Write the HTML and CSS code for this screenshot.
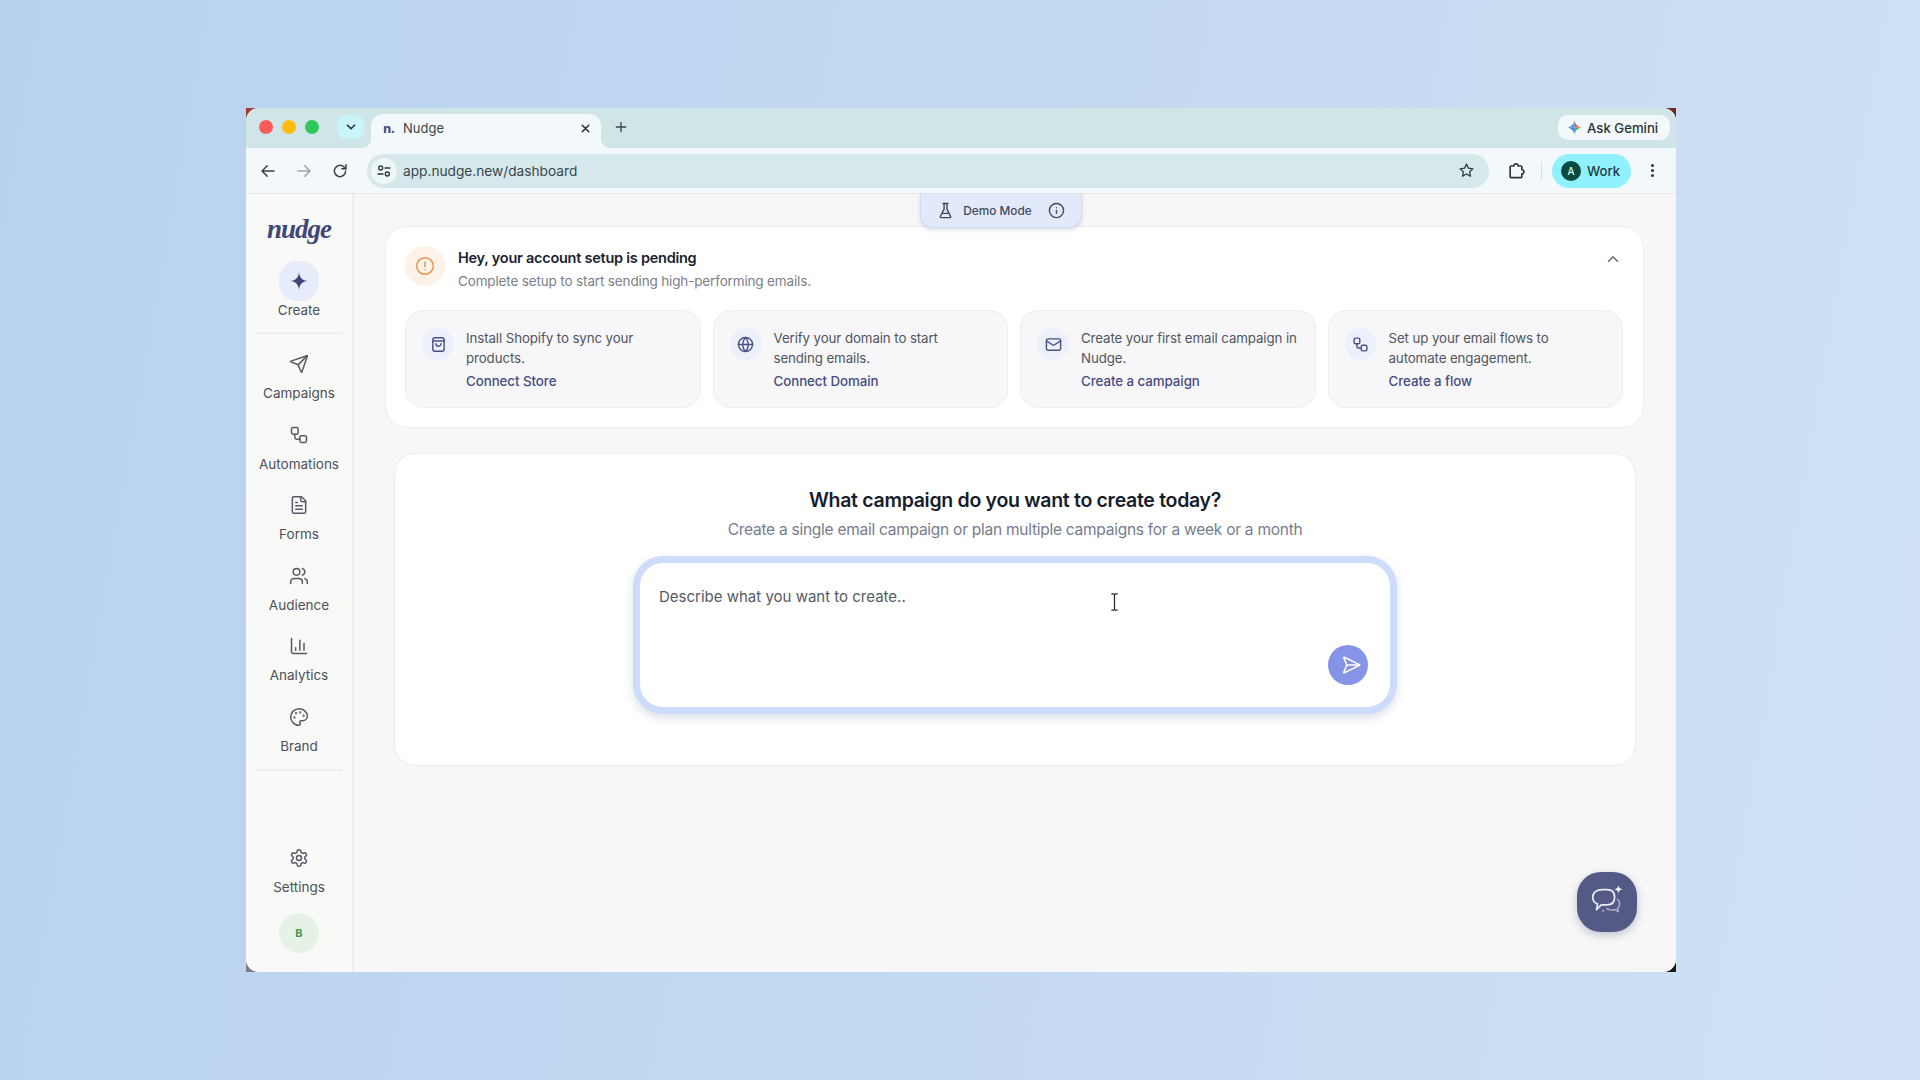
FILE: index.html
```html
<!DOCTYPE html>
<html lang="en">
<head>
<meta charset="utf-8">
<title>Nudge</title>
<link rel="stylesheet" href="styles.css">
</head>
<body>
<svg class="defs" width="0" height="0" aria-hidden="true">
  <symbol id="i-send" viewBox="0 0 24 24"><path d="M14.536 21.686a.5.5 0 0 0 .937-.024l6.5-19a.496.496 0 0 0-.635-.635l-19 6.5a.5.5 0 0 0-.024.937l7.93 3.18a2 2 0 0 1 1.112 1.11z"/><path d="m21.854 2.147-10.94 10.939"/></symbol>
  <symbol id="i-flow" viewBox="0 0 24 24"><rect width="8" height="8" x="3" y="3" rx="2"/><path d="M7 11v4a2 2 0 0 0 2 2h4"/><rect width="8" height="8" x="13" y="13" rx="2"/></symbol>
  <symbol id="i-file" viewBox="0 0 24 24"><path d="M15 2H6a2 2 0 0 0-2 2v16a2 2 0 0 0 2 2h12a2 2 0 0 0 2-2V7Z"/><path d="M14 2v4a2 2 0 0 0 2 2h4"/><path d="M10 9H8"/><path d="M16 13H8"/><path d="M16 17H8"/></symbol>
  <symbol id="i-users" viewBox="0 0 24 24"><path d="M16 21v-2a4 4 0 0 0-4-4H6a4 4 0 0 0-4 4v2"/><circle cx="9" cy="7" r="4"/><path d="M22 21v-2a4 4 0 0 0-3-3.87"/><path d="M16 3.13a4 4 0 0 1 0 7.75"/></symbol>
  <symbol id="i-chart" viewBox="0 0 24 24"><path d="M3 3v16a2 2 0 0 0 2 2h16"/><path d="M18 17V9"/><path d="M13 17V5"/><path d="M8 17v-3"/></symbol>
  <symbol id="i-palette" viewBox="0 0 24 24"><circle cx="13.5" cy="6.5" r=".5"/><circle cx="17.5" cy="10.5" r=".5"/><circle cx="8.5" cy="7.5" r=".5"/><circle cx="6.5" cy="12.5" r=".5"/><path d="M12 2C6.5 2 2 6.5 2 12s4.5 10 10 10c.926 0 1.648-.746 1.648-1.688 0-.437-.18-.835-.437-1.125-.29-.289-.438-.652-.438-1.125a1.64 1.64 0 0 1 1.668-1.668h1.996c3.051 0 5.555-2.503 5.555-5.554C21.965 6.012 17.461 2 12 2z"/></symbol>
  <symbol id="i-gear" viewBox="0 0 24 24"><path d="M12.22 2h-.44a2 2 0 0 0-2 2v.18a2 2 0 0 1-1 1.73l-.43.25a2 2 0 0 1-2 0l-.15-.08a2 2 0 0 0-2.73.73l-.22.38a2 2 0 0 0 .73 2.73l.15.1a2 2 0 0 1 1 1.72v.51a2 2 0 0 1-1 1.74l-.15.09a2 2 0 0 0-.73 2.73l.22.38a2 2 0 0 0 2.73.73l.15-.08a2 2 0 0 1 2 0l.43.25a2 2 0 0 1 1 1.73V20a2 2 0 0 0 2 2h.44a2 2 0 0 0 2-2v-.18a2 2 0 0 1 1-1.73l.43-.25a2 2 0 0 1 2 0l.15.08a2 2 0 0 0 2.73-.73l.22-.39a2 2 0 0 0-.73-2.73l-.15-.08a2 2 0 0 1-1-1.74v-.5a2 2 0 0 1 1-1.74l.15-.09a2 2 0 0 0 .73-2.73l-.22-.38a2 2 0 0 0-2.73-.73l-.15.08a2 2 0 0 1-2 0l-.43-.25a2 2 0 0 1-1-1.73V4a2 2 0 0 0-2-2z"/><circle cx="12" cy="12" r="3"/></symbol>
  <symbol id="i-bag" viewBox="0 0 24 24"><rect x="4" y="2.500" width="16" height="19" rx="3"/><path d="M4 7h16"/><path d="M8.500 11a3.500 3.500 0 0 0 7 0"/></symbol>
  <symbol id="i-globe" viewBox="0 0 24 24"><circle cx="12" cy="12" r="10"/><path d="M12 2a14.500 14.500 0 0 0 0 20 14.500 14.500 0 0 0 0-20"/><path d="M2 12h20"/></symbol>
  <symbol id="i-mail" viewBox="0 0 24 24"><rect width="20" height="16" x="2" y="4" rx="2"/><path d="m22 7-8.970 5.700a1.940 1.940 0 0 1-2.060 0L2 7"/></symbol>
</svg>

<div class="window">
  <span class="chip chip-tl"></span><span class="chip chip-tr"></span><span class="chip chip-bl"></span><span class="chip chip-br"></span>
  <div class="browser">
    <header class="tabbar">
      <div class="lights"><span class="light red"></span><span class="light yellow"></span><span class="light green"></span></div>
      <div class="tabsearch">
        <svg class="ico-chev" viewBox="0 0 24 24"><path d="m6 9 6 6 6-6"/></svg>
      </div>
      <div class="tab">
        <span class="favicon">n.</span>
        <span class="tabtitle">Nudge</span>
        <svg class="ico-close" viewBox="0 0 24 24"><path d="M6 6l12 12M18 6 6 18"/></svg>
      </div>
      <svg class="ico-plus" viewBox="0 0 24 24"><path d="M12 5v14M5 12h14"/></svg>
      <div class="gemini">
        <svg class="ico-gem" viewBox="0 0 24 24">
          <path class="g1" d="M12 0C12.600 6.500 17.500 11.400 24 12H12Z"/>
          <path class="g2" d="M24 12C17.500 12.600 12.600 17.500 12 24V12Z"/>
          <path class="g3" d="M12 24C11.400 17.500 6.500 12.600 0 12H12Z"/>
          <path class="g4" d="M0 12C6.500 11.400 11.400 6.500 12 0V12Z"/>
        </svg>
        <span>Ask Gemini</span>
      </div>
    </header>

    <div class="toolbar">
      <svg class="tb-ico" viewBox="0 0 24 24"><path d="M20 12H5M11 5l-7 7 7 7"/></svg>
      <svg class="tb-ico dim" viewBox="0 0 24 24"><path d="M4 12h15M13 5l7 7-7 7"/></svg>
      <svg class="tb-ico" viewBox="0 0 24 24"><path d="M19.500 12a7.500 7.500 0 1 1-2.200-5.300L19.500 9"/><path d="M20 3.500V9h-5.500"/></svg>
      <div class="omnibox">
        <span class="siteinfo">
          <svg viewBox="0 0 24 24"><circle cx="7" cy="7.500" r="3"/><path d="M13.500 7.500H21M3 16.500h7.500"/><circle cx="17" cy="16.500" r="3"/></svg>
        </span>
        <span class="url">app.nudge.new/dashboard</span>
        <svg class="ico-star" viewBox="0 0 24 24"><path d="m12 3 2.700 5.800 6.300.8-4.600 4.300 1.200 6.300L12 17l-5.600 3.200 1.200-6.300L3 9.600l6.300-.8Z"/></svg>
      </div>
      <svg class="ico-ext" viewBox="0 0 24 24"><path d="M6 6h3.500a2.500 2.500 0 0 1 5 0H18a1 1 0 0 1 1 1v3.500a2.500 2.500 0 0 1 0 5V19a1 1 0 0 1-1 1H6a1 1 0 0 1-1-1V7a1 1 0 0 1 1-1Z"/></svg>
      <span class="tb-sep"></span>
      <div class="workpill"><span class="work-av">A</span><span>Work</span></div>
      <div class="kebab"><i></i><i></i><i></i></div>
    </div>

    <div class="app">
      <aside class="sidebar">
        <div class="logo">nudge</div>
        <div class="nav-item create">
          <span class="create-ico">
            <svg viewBox="0 0 24 24"><path d="M12 1.500C12.700 8 16 11.300 22.500 12 16 12.700 12.700 16 12 22.500 11.300 16 8 12.700 1.500 12 8 11.300 11.300 8 12 1.500Z"/></svg>
          </span>
          <span>Create</span>
        </div>
        <hr class="side-rule">
        <nav class="nav">
          <div class="nav-item"><svg class="nav-ico"><use href="#i-send"/></svg><span>Campaigns</span></div>
          <div class="nav-item"><svg class="nav-ico"><use href="#i-flow"/></svg><span>Automations</span></div>
          <div class="nav-item"><svg class="nav-ico"><use href="#i-file"/></svg><span>Forms</span></div>
          <div class="nav-item"><svg class="nav-ico"><use href="#i-users"/></svg><span>Audience</span></div>
          <div class="nav-item"><svg class="nav-ico"><use href="#i-chart"/></svg><span>Analytics</span></div>
          <div class="nav-item"><svg class="nav-ico"><use href="#i-palette"/></svg><span>Brand</span></div>
        </nav>
        <hr class="side-rule">
        <div class="side-bottom">
          <div class="nav-item"><svg class="nav-ico"><use href="#i-gear"/></svg><span>Settings</span></div>
          <div class="user-av">B</div>
        </div>
      </aside>

      <main class="main">
        <div class="demo">
          <svg class="demo-ico" viewBox="0 0 24 24"><path d="M10 2v7.527a2 2 0 0 1-.211.896L4.720 20.550a1 1 0 0 0 .9 1.450h12.760a1 1 0 0 0 .9-1.450l-5.069-10.127A2 2 0 0 1 14 9.527V2"/><path d="M8.500 2h7"/><path d="M7 16h10"/></svg>
          <span class="demo-label">Demo Mode</span>
          <svg class="demo-ico info" viewBox="0 0 24 24"><circle cx="12" cy="12" r="10"/><path d="M12 16v-4"/><path d="M12 8h.01"/></svg>
        </div>

        <section class="setup">
          <div class="setup-head">
            <span class="warn"><svg viewBox="0 0 24 24"><circle cx="12" cy="12" r="10"/><path d="M12 7.500v5.500"/><path d="M12 16.500h.01"/></svg></span>
            <div class="setup-titles">
              <h2>Hey, your account setup is pending</h2>
              <p>Complete setup to start sending high-performing emails.</p>
            </div>
            <svg class="ico-up" viewBox="0 0 24 24"><path d="m18 15-6-6-6 6"/></svg>
          </div>
          <div class="steps">
            <article class="step">
              <span class="step-ico"><svg><use href="#i-bag"/></svg></span>
              <div><p>Install Shopify to sync your<br>products.</p><a>Connect Store</a></div>
            </article>
            <article class="step">
              <span class="step-ico"><svg><use href="#i-globe"/></svg></span>
              <div><p>Verify your domain to start<br>sending emails.</p><a>Connect Domain</a></div>
            </article>
            <article class="step">
              <span class="step-ico"><svg><use href="#i-mail"/></svg></span>
              <div><p>Create your first email campaign in<br>Nudge.</p><a>Create a campaign</a></div>
            </article>
            <article class="step">
              <span class="step-ico"><svg><use href="#i-flow"/></svg></span>
              <div><p>Set up your email flows to<br>automate engagement.</p><a>Create a flow</a></div>
            </article>
          </div>
        </section>

        <section class="compose">
          <h1>What campaign do you want to create today?</h1>
          <p class="compose-sub">Create a single email campaign or plan multiple campaigns for a week or a month</p>
          <div class="inputbox">
            <span class="placeholder">Describe what you want to create..</span>
            <button class="sendbtn" type="button"><svg><use href="#i-send"/></svg></button>
            <svg class="ibeam" viewBox="0 0 10 20"><path d="M2 1h2l1 1 1-1h2M5 2v16M2 19h2l1-1 1 1h2"/></svg>
          </div>
        </section>

        <button class="fab" type="button">
          <svg viewBox="0 0 40 40">
            <path class="fab-main" d="M15 7h5c5 0 8 3 8 8s-3 8-8 8h-6l-5 5 1-6c-3-1-5-4-5-7 0-5 4-8 10-8Z"/>
            <path class="fab-back" d="M31 17c3 2 3 8 0 10l1 3-4-2c-3 1-6 0-8-1"/>
            <path class="fab-spark" d="M32 2c.4 3 1.500 4.100 4.500 4.500-3 .4-4.100 1.500-4.500 4.500-.4-3-1.500-4.100-4.500-4.500 3-.4 4.100-1.500 4.500-4.500Z"/>
            <path class="fab-spark dim" d="M16 27c.2 1.500.8 2.100 2.300 2.300-1.500.2-2.100.8-2.300 2.300-.2-1.500-.8-2.100-2.300-2.300 1.500-.2 2.100-.8 2.300-2.300Z"/>
          </svg>
        </button>
      </main>
    </div>
  </div>
</div>
</body>
</html>
```

FILE: styles.css
```css
* { box-sizing: border-box; }
html, body { height: 100%; }
body {
  margin: 0;
  padding: 108px 244px 108px 246px;
  background: linear-gradient(100deg, #b8d2ee 0%, #c3d9f1 50%, #d0e1f5 100%);
  font-family: "Inter", "Liberation Sans", sans-serif;
  color: #1a2030;
  overflow: hidden;
}
.defs { position: absolute; }
svg { fill: none; stroke: currentColor; stroke-width: 2; stroke-linecap: round; stroke-linejoin: round; }
h1, h2, p { margin: 0; }

/* window */
.window { position: relative; height: 864px; }
.browser {
  position: relative;
  height: 100%;
  border-radius: 13px;
  overflow: hidden;
  display: flex;
  flex-direction: column;
  background: #f7f7f8;
}
.chip { position: absolute; width: 14px; height: 14px; }
.chip-tl { left: 0; top: 0; background: #a43a34; }
.chip-tr { right: 0; top: 0; background: #6b2a22; }
.chip-bl { left: 0; bottom: 0; background: #7d7a88; }
.chip-br { right: 0; bottom: 0; background: #1a1c14; }

/* tab strip */
.tabbar {
  height: 40px;
  flex: none;
  display: flex;
  align-items: flex-start;
  background: #cfe5e8;
  padding-left: 13px;
}
.lights { display: flex; gap: 9px; margin-top: 12px; }
.light { width: 14px; height: 14px; border-radius: 50%; }
.red { background: #fb5a5b; }
.yellow { background: #fdbd0f; }
.green { background: #2ec95a; }
.tabsearch {
  width: 27px; height: 24px; margin: 7px 0 0 18px;
  border-radius: 9px; background: #c9f5fa;
  display: flex; align-items: center; justify-content: center;
}
.ico-chev { width: 14px; height: 14px; stroke-width: 3; color: #243a44; }
.tab {
  position: relative;
  width: 230px; height: 34px; margin: 6px 0 0 7px;
  background: #f3f9fb;
  border-radius: 12px 12px 0 0;
  display: flex; align-items: center;
  padding: 0 8px 6px 10px;
  font-size: 13px; color: #3b4348;
}
.tab::before, .tab::after {
  content: ""; position: absolute; bottom: 0; width: 10px; height: 10px;
}
.tab::before { left: -10px; background: radial-gradient(circle at 0 0, transparent 10px, #f3f9fb 10.500px); }
.tab::after { right: -10px; background: radial-gradient(circle at 100% 0, transparent 10px, #f3f9fb 10.500px); }
.favicon {
  width: 16px; font-size: 12.500px; font-weight: 800; color: #4a4f82;
  margin-right: 6px; letter-spacing: -.5px;
  text-align: center;
}
.tabtitle { flex: 1; }
.ico-close { width: 13px; height: 13px; stroke-width: 2.800; color: #2c3236; margin-right: 1px; }
.ico-plus { width: 16px; height: 16px; margin: 11px 0 0 12px; color: #39464b; }
.gemini {
  margin: 7px 6px 0 auto;
  width: 112px; height: 25px;
  border-radius: 10px; background: #f3f9fb;
  display: flex; align-items: center; gap: 5px;
  padding-left: 9px;
  font-size: 13.200px; font-weight: 500; color: #2b3236;
}
.ico-gem { width: 15px; height: 15px; stroke: none; }
.g1 { fill: #ea5a45; }
.g2 { fill: #4fae62; }
.g3 { fill: #3d7fe8; }
.g4 { fill: #4e8ee6; }

/* toolbar */
.toolbar {
  height: 46px;
  flex: none;
  display: flex;
  align-items: center;
  background: #f3f9fb;
  border-bottom: 1px solid #e4e8e8;
  padding-left: 13px;
}
.tb-ico { width: 18px; height: 18px; margin-right: 18px; color: #3a4246; stroke-width: 2; }
.tb-ico.dim { color: #9aa3a7; }
.omnibox {
  width: 1122px; height: 34px; flex: none;
  background: #d6e8ec;
  border-radius: 17px;
  display: flex; align-items: center;
  padding-left: 4px;
  font-size: 13.700px; color: #39464b;
}
.siteinfo {
  width: 26px; height: 26px; border-radius: 50%;
  background: #eef6f8;
  display: flex; align-items: center; justify-content: center;
  margin-right: 6px;
}
.siteinfo svg { width: 16px; height: 16px; color: #2f383c; stroke-width: 2; }
.url { flex: 1; }
.ico-star { width: 17px; height: 17px; margin-right: 14px; color: #2f383c; stroke-width: 1.800; }
.ico-ext { width: 20px; height: 20px; margin-left: 17px; color: #2f383c; }
.tb-sep { width: 1px; height: 18px; background: #bfe4ea; margin: 0 10px 0 15px; }
.workpill {
  width: 79px; height: 34px; border-radius: 17px;
  background: #8ff0fe;
  display: flex; align-items: center; gap: 6px;
  padding-left: 9px;
  font-size: 13.200px; font-weight: 500; color: #1f3a40;
}
.work-av {
  width: 20px; height: 20px; border-radius: 50%;
  background: #0a4a42; color: #cfe;
  font-size: 10px; font-weight: 500;
  display: flex; align-items: center; justify-content: center;
}
.kebab { display: flex; flex-direction: column; gap: 2px; margin-left: 20px; }
.kebab i { width: 3px; height: 3px; border-radius: 50%; background: #2f383c; display: block; }

/* app */
.app { flex: 1; display: flex; min-height: 0; }
.sidebar {
  width: 108px; flex: none;
  background: #f9faf7;
  border-right: 2px solid #eceee8;
  display: flex; flex-direction: column; align-items: center;
  padding-top: 17px;
}
.logo {
  font-family: "Liberation Serif", serif;
  font-style: italic; font-weight: 700;
  font-size: 27px; line-height: 36px; letter-spacing: -1px;
  color: #3f4778;
}
.nav-item {
  display: flex; flex-direction: column; align-items: center;
  font-size: 13.500px; line-height: 18px; color: #4b505c;
  gap: 10px;
}
.create { margin-top: 14px; gap: 0; }
.create-ico {
  width: 40px; height: 40px; border-radius: 18px;
  background: #e7ecfb;
  display: flex; align-items: center; justify-content: center;
}
.create-ico svg { width: 20px; height: 20px; fill: #3f4778; stroke: none; }
.side-rule {
  width: 88px; height: 2px; margin: 13px 0 0;
  background: #edefea; border: 0;
}
.nav { display: flex; flex-direction: column; gap: 22.500px; margin-top: 20px; align-items: center; }
.nav-ico { width: 20px; height: 20px; color: #555a68; stroke-width: 1.800; }
.nav + .side-rule { margin-top: 14px; }
.side-bottom { margin-top: auto; padding-bottom: 19px; display: flex; flex-direction: column; align-items: center; gap: 17px; }
.user-av {
  width: 40px; height: 40px; border-radius: 50%;
  background: #e7f2e6;
  color: #3f9a4a; font-size: 11px; font-weight: 700;
  display: flex; align-items: center; justify-content: center;
}

/* main */
.main {
  position: relative;
  flex: 1; min-width: 0;
  padding: 32px 32px 0 31px;
  background: #f7f7f8;
}
.demo {
  position: absolute; left: 566px; top: 0;
  width: 162px; height: 34px;
  background: #e1e9fb;
  border: 1px solid #cfdcf5; border-top: 0;
  border-radius: 0 0 13px 13px;
  box-shadow: 0 2px 4px rgba(70, 90, 140, .2);
  display: flex; align-items: center; justify-content: center; gap: 9px;
  font-size: 11.800px; font-weight: 500; color: #444b5c;
  z-index: 2;
}
.demo-label { margin-right: 7px; }
.demo-ico { width: 17px; height: 17px; color: #444b5c; }

.setup {
  height: 202px;
  background: #fff;
  border: 1px solid #eceef0;
  border-radius: 22px;
  padding: 19px 18px 0 19px;
}
.setup-head { display: flex; align-items: flex-start; }
.warn {
  width: 40px; height: 40px; flex: none; border-radius: 50%;
  background: #fdf2e7;
  display: flex; align-items: center; justify-content: center;
  margin-right: 13px;
}
.warn svg { width: 20px; height: 20px; color: #e9944d; stroke-width: 1.800; }
.setup-titles { flex: 1; padding-top: 1px; }
.setup-titles h2 { font-size: 14.500px; line-height: 22px; font-weight: 600; color: #1b2230; letter-spacing: -.25px; }
.setup-titles p { font-size: 13.500px; line-height: 24px; color: #7a7f8a; letter-spacing: -.15px; }
.ico-up { width: 18px; height: 18px; color: #646a72; margin: 4px 3px 0 0; }
.steps { display: grid; grid-template-columns: repeat(4, 295.500px); gap: 12px; margin-top: 17px; }
.step {
  height: 98px;
  background: #f7f7f9;
  border: 1px solid #eceef0;
  border-radius: 18px;
  padding: 17px 8px 0 16px;
  display: flex; gap: 12px;
}
.step-ico {
  width: 32px; height: 32px; flex: none; border-radius: 50%;
  background: #ecf0fb;
  display: flex; align-items: center; justify-content: center;
}
.step-ico svg { width: 17px; height: 17px; color: #4a5186; stroke-width: 2; }
.step p { font-size: 13.300px; line-height: 20px; color: #50555f; letter-spacing: -.1px; }
.step a { display: block; margin-top: 3px; font-size: 13.300px; line-height: 20px; font-weight: 500; color: #454c82; letter-spacing: -.05px; }

.compose {
  margin: 25px 8px 0 9px;
  height: 313px;
  background: #fff;
  border: 1px solid #eceef0;
  border-radius: 22px;
  display: flex; flex-direction: column; align-items: center;
  padding-top: 33px;
}
.compose h1 { font-size: 19.500px; line-height: 26px; font-weight: 600; color: #161d2c; letter-spacing: -.3px; }
.compose-sub { margin-top: 5px; font-size: 15.500px; line-height: 24px; color: #767c8f; letter-spacing: -.26px; }
.inputbox {
  position: relative;
  width: 764px; height: 158px;
  margin-top: 14px;
  background: #fff;
  border: 7px solid #ccdcfa;
  border-radius: 30px;
  box-shadow: 0 4px 10px rgba(60, 80, 130, .18);
  padding: 23px 19px;
}
.placeholder { font-size: 15px; line-height: 22px; color: #555a64; }
.sendbtn {
  position: absolute; right: 22px; bottom: 22px;
  width: 40px; height: 40px; padding: 0;
  border: 0; border-radius: 50%;
  background: #8594e6; color: #fff;
  display: flex; align-items: center; justify-content: center;
}
.sendbtn svg { width: 20px; height: 20px; transform: rotate(45deg); stroke-width: 1.800; }
.ibeam {
  position: absolute; left: 470px; top: 30px;
  width: 9px; height: 18px; color: #2b2b2b; stroke-width: 1.400;
}
.fab {
  position: absolute; right: 39px; bottom: 40px;
  width: 60px; height: 60px; padding: 0;
  border: 0; border-radius: 24px;
  background: #545a85;
  box-shadow: 0 3px 8px rgba(60, 65, 110, .3);
  display: flex; align-items: center; justify-content: center;
}
.fab svg { width: 38px; height: 38px; color: #e8ebf5; stroke-width: 1.800; }
.fab-back { stroke: #a3a8c8; }
.fab-spark { fill: #f1f3fa; stroke: none; }
.fab-spark.dim { fill: #a3a8c8; }
```
